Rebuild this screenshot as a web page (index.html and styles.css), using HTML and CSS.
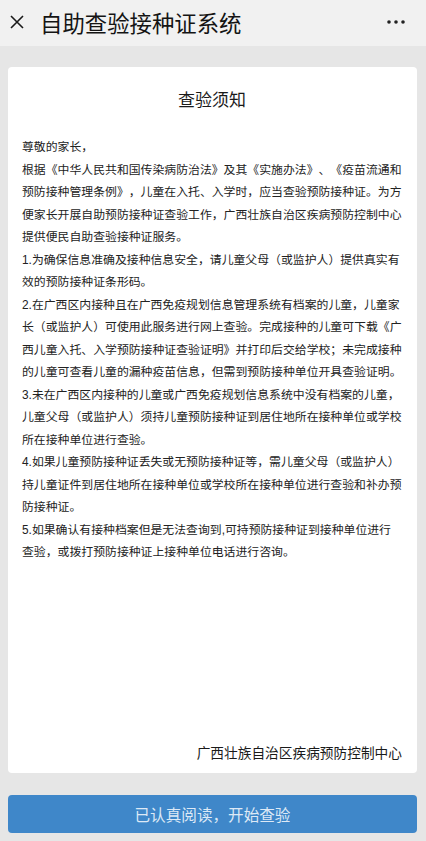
FILE: index.html
```html
<!DOCTYPE html>
<html lang="zh-CN">
<head>
<meta charset="utf-8">
<title>自助查验接种证系统</title>
<link rel="stylesheet" href="styles.css">
</head>
<body>
<div class="page">
  <header class="topbar">
    <svg class="close" width="16" height="16" viewBox="0 0 16 16"><path d="M2 2L14 14M14 2L2 14" stroke="#1a1a1a" stroke-width="1.6" fill="none"/></svg>
    <h1 class="topbar-title">自助查验接种证系统</h1>
    <svg class="more" width="20" height="6" viewBox="0 0 20 6"><circle cx="3" cy="3" r="1.8" fill="#222"/><circle cx="10" cy="3" r="1.8" fill="#222"/><circle cx="17" cy="3" r="1.8" fill="#222"/></svg>
  </header>
  <main class="main">
    <section class="card">
      <h2 class="card-title">查验须知</h2>
      <div class="notice">
        <p>尊敬的家长，</p>
        <p>根据《中华人民共和国传染病防治法》及其《实施办法》、《疫苗流通和预防接种管理条例》，儿童在入托、入学时，应当查验预防接种证。为方便家长开展自助预防接种证查验工作，广西壮族自治区疾病预防控制中心提供便民自助查验接种证服务。</p>
        <p>1.为确保信息准确及接种信息安全，请儿童父母（或监护人）提供真实有效的预防接种证条形码。</p>
        <p>2.在广西区内接种且在广西免疫规划信息管理系统有档案的儿童，儿童家长（或监护人）可使用此服务进行网上查验。完成接种的儿童可下载《广西儿童入托、入学预防接种证查验证明》并打印后交给学校；未完成接种的儿童可查看儿童的漏种疫苗信息，但需到预防接种单位开具查验证明。</p>
        <p>3.未在广西区内接种的儿童或广西免疫规划信息系统中没有档案的儿童，儿童父母（或监护人）须持儿童预防接种证到居住地所在接种单位或学校所在接种单位进行查验。</p>
        <p>4.如果儿童预防接种证丢失或无预防接种证等，需儿童父母（或监护人）持儿童证件到居住地所在接种单位或学校所在接种单位进行查验和补办预防接种证。</p>
        <p>5.如果确认有接种档案但是无法查询到,可持预防接种证到接种单位进行查验，或拨打预防接种证上接种单位电话进行咨询。</p>
      </div>
      <p class="signature">广西壮族自治区疾病预防控制中心</p>
    </section>
    <button class="start-btn" type="button">已认真阅读，开始查验</button>
  </main>
</div>
</body>
</html>
```
FILE: styles.css
```css
* { box-sizing: border-box; }
html, body {
  margin: 0;
  padding: 0;
  background: #e6e6e6;
  font-family: "Noto Sans CJK SC", "Noto Sans", sans-serif;
  color: #222;
  text-spacing-trim: space-all;
}
.page {
  height: 841px;
  display: flex;
  flex-direction: column;
}
.topbar {
  height: 46px;
  flex: none;
  background: #f1f1f1;
  display: flex;
  align-items: center;
  padding: 0 20px 2px 9px;
}
.close { flex: none; margin-right: 15px; }
.topbar-title {
  margin: 0;
  flex: 1;
  font-size: 22.4px;
  font-weight: 400;
  color: #141414;
  line-height: 30px;
}
.more { flex: none; }
.main {
  flex: 1;
  display: flex;
  flex-direction: column;
  gap: 22px;
  padding: 21px 9px 8px 8px;
}
.card {
  flex: 1;
  background: #fff;
  border-radius: 4px;
  padding: 20px 15px 10px 14px;
  display: flex;
  flex-direction: column;
}
.card-title {
  margin: 0 0 25px;
  text-align: center;
  font-size: 17px;
  font-weight: 400;
  line-height: 24px;
  color: #1a1a1a;
}
.notice {
  width: 380px;
}
.notice p {
  margin: 0;
  font-family: "Liberation Sans", "Noto Sans CJK SC", sans-serif;
  font-size: 11.86px;
  line-height: 22.5px;
  color: #222;
  text-spacing-trim: space-all;
}
.signature {
  margin: auto 0 0;
  text-align: right;
  font-size: 13.7px;
  line-height: 22px;
  color: #1a1a1a;
}
.start-btn {
  flex: none;
  height: 38px;
  border: none;
  border-radius: 4px;
  background: #3f87c9;
  color: #dde9f6;
  font-family: inherit;
  font-size: 15.6px;
  padding: 0;
}
```
